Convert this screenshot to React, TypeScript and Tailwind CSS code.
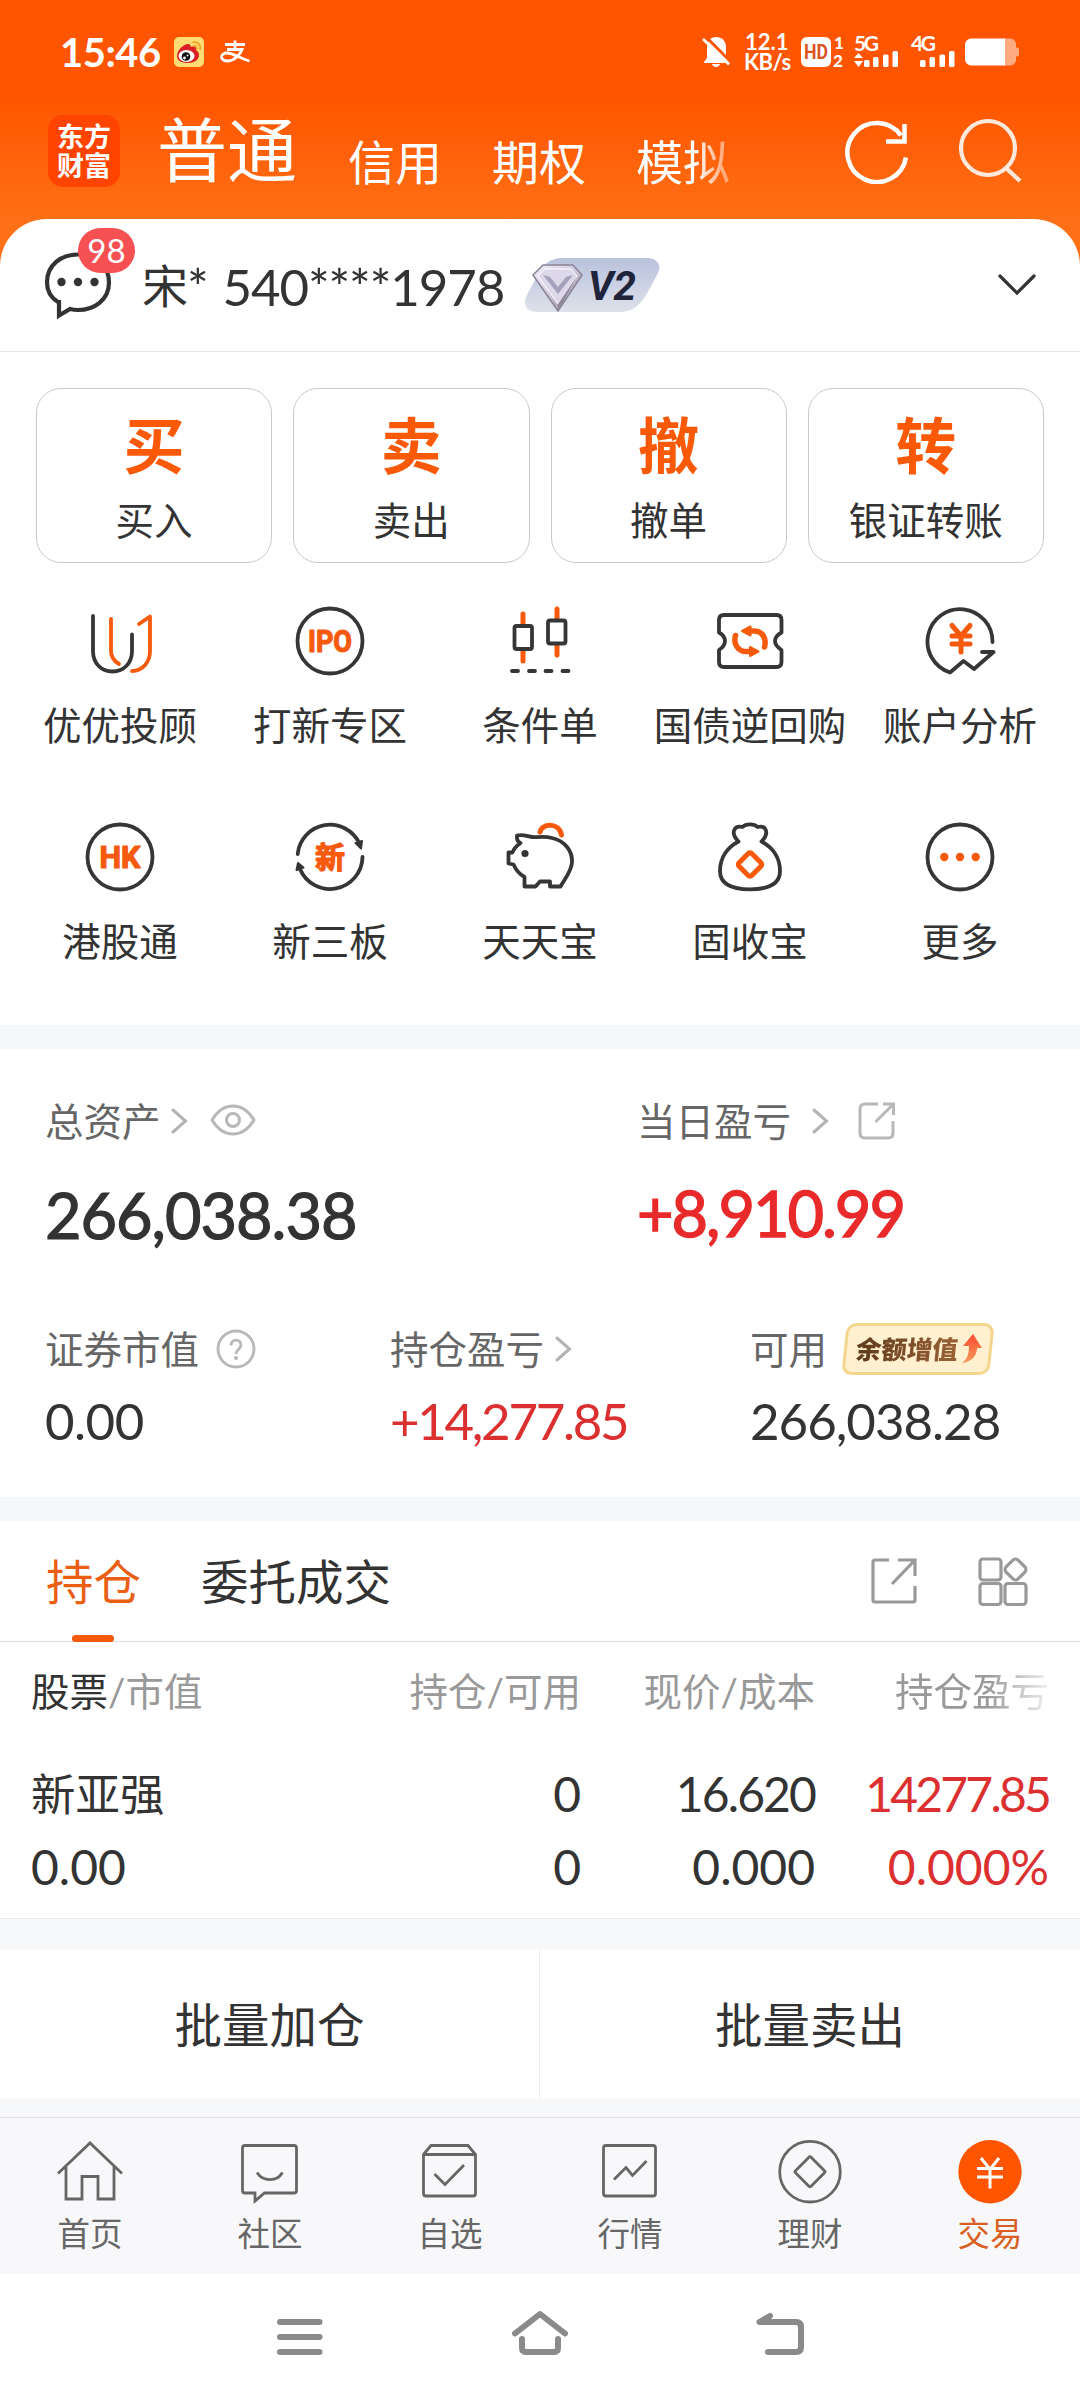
import React from "react";

const FONT = "font-[Lato,'Noto_Sans_CJK_SC',sans-serif]";

function StatusBar() {
  return (
    <div className="flex h-[100px] items-center justify-between pl-[60px] pr-[61px] pt-[3px] text-white">
      <div className="flex items-center">
        <span className="w-[114px] whitespace-nowrap text-[40px] font-bold leading-none tracking-[-0.5px]">15:46</span>
        <svg width="30" height="30" viewBox="0 0 30 30">
          <rect width="30" height="30" rx="5" fill="#ffdc74" />
          <path d="M3 19C3 13 10 7 14 7c2 0 3 1 2.500 3 3-1 6-.5 5.500 3 2 1 3 3 3 5 0 5-5 8-11 8S3 24 3 19Z" fill="#dc1f26" />
          <ellipse cx="12.500" cy="19" rx="8" ry="6" fill="#fff" />
          <circle cx="12" cy="19.500" r="4.300" fill="#111" />
          <circle cx="10.500" cy="21" r="1.400" fill="#fff" />
          <circle cx="13.500" cy="18.500" r="0.900" fill="#fff" />
          <path d="M18.500 5.500c5-1.500 9 2.500 7.500 7.500M19 9c2.500-.6 4.500 1.200 4 3.500" fill="none" stroke="#f0a020" strokeWidth="1.700" />
        </svg>
        <svg className="ml-[16px]" width="31" height="24" viewBox="0 0 31 24" fill="none" stroke="#fff" strokeWidth="2.800">
          <path d="M5 4.500H25M15 0.500V9.500M7 9.500H22C20 15 14 21 8 21C3.500 21 1.500 19 1.500 17C1.500 14.500 4 13 7 13C13 13 20 18.500 29.500 21" />
        </svg>
      </div>
      <div className="flex items-center">
        <svg width="28" height="32" viewBox="0 0 28 32">
          <path d="M14 1c6 0 10 4 10 10v11l3 4v1H2v-1l3-4V11C5 5 9 1 14 1ZM10 28h8c-.5 4-7.500 4-8 0Z" fill="#fff" />
          <path d="M2 -1L30 27" stroke="#ff5500" strokeWidth="3" />
          <path d="M1 3L27 28.500" stroke="#fff" strokeWidth="2.600" />
        </svg>
        <div className="ml-[14px] flex w-[57px] flex-col whitespace-nowrap text-[22px] font-bold leading-[20px]">
          <div className="pl-px">12.1</div>
          <div className="tracking-[-0.5px]">KB/s</div>
        </div>
        <svg className="overflow-visible" width="43" height="32" viewBox="0 0 43 32">
          <rect y="1" width="30" height="30" rx="6" fill="#fff" />
          <text x="15" y="23" textAnchor="middle" textLength="24" lengthAdjust="spacingAndGlyphs" className="font-[Roboto]" fontSize="20" fontWeight="700" fill="#d9541e">HD</text>
          <text x="33" y="13" fontSize="17" fontWeight="900" className="font-[Lato]" fill="#fff">1</text>
          <text x="32" y="31" fontSize="17" fontWeight="900" className="font-[Lato]" fill="#fff">2</text>
        </svg>
        <svg className="ml-[10px] overflow-visible" width="46" height="32" viewBox="0 0 46 32" fill="#fff">
          <text x="0" y="15" fontSize="21" fontWeight="700" className="font-[Lato]" textLength="25">5G</text>
          <path d="M0 22l4.500-5 4.500 5ZM0 25h9l-4.500 6Z" />
          <rect x="10" y="24" width="5.500" height="7" rx="1.500" />
          <rect x="19" y="21" width="5.500" height="10" rx="1.500" />
          <rect x="29" y="18.500" width="5.500" height="12.500" rx="1.500" />
          <rect x="38.500" y="15" width="5.500" height="16" rx="1.500" />
        </svg>
        <svg className="ml-[11px] overflow-visible" width="46" height="32" viewBox="0 0 46 32" fill="#fff">
          <text x="0" y="15" fontSize="21" fontWeight="700" className="font-[Lato]" textLength="25">4G</text>
          <rect x="9" y="24" width="5.500" height="7" rx="1.500" />
          <rect x="18.500" y="21" width="5.500" height="10" rx="1.500" />
          <rect x="28.500" y="18.500" width="5.500" height="12.500" rx="1.500" />
          <rect x="38" y="15" width="5.500" height="16" rx="1.500" />
        </svg>
        <svg className="ml-[8px]" width="54" height="28" viewBox="0 0 54 28">
          <path d="M40 0.500H45c3.500 0 6 2.500 6 6V9.500h1c1.500 0 2 1 2 2v5c0 1-.5 2-2 2h-1V21.500c0 3.500-2.500 6-6 6H40Z" fill="#ffab82" />
          <path d="M7 0.500H40V27.500H7c-4 0-7-2.500-7-6.500V7C0 3 3 .5 7 .5Z" fill="#fff" />
        </svg>
      </div>
    </div>
  );
}

function Header() {
  return (
    <div className="flex h-[119px] items-start pl-[48px] text-white">
      <div className="mt-[15px] flex size-[72px] flex-col items-center justify-center rounded-[15px] bg-[#ff4400] text-[27px] font-bold leading-[29px]">
        <div>东方</div>
        <div>财富</div>
      </div>
      <div className="ml-[37px] mt-[15px] w-[144px] text-[70px] leading-none">普通</div>
      <div className="ml-[47px] mt-[39px] flex gap-[50px] text-[47px] leading-none">
        <span>信用</span>
        <span>期权</span>
        <span className="[mask-image:linear-gradient(90deg,#000_62%,rgba(0,0,0,0.35)_100%)]">模拟</span>
      </div>
      <svg className="ml-[114px] mt-[18px]" width="66" height="66" viewBox="0 0 66 66" fill="none" stroke="#fff" strokeWidth="4.500">
        <path d="M62 39.500A29.500 29.500 0 1 1 57 17.500" />
        <path d="M42 23.500H60.500V6" />
      </svg>
      <svg className="ml-[47px] mt-[17px]" width="66" height="66" viewBox="0 0 66 66" fill="none" stroke="#ffe9dc" strokeWidth="4.200">
        <circle cx="31" cy="31" r="27" />
        <path d="M49 51L63 64" />
      </svg>
    </div>
  );
}

function AccountRow() {
  return (
    <div className="flex h-[133px] items-center border-b border-[#e6e6e6] pl-[44px] pr-[43px]">
      <div className="relative">
        <svg width="70" height="70" viewBox="0 0 70 70" fill="none" className="mt-px">
          <path d="M14 51C6 46 3 39 3 31.500C3 14 17 3.500 34 3.500S65 14 65 31.500S50 59 34 59C31 59 28 58.500 26 58L15 64.500V51Z" stroke="#333" strokeWidth="4.200" />
          <circle cx="17.500" cy="31" r="4.200" fill="#333" />
          <circle cx="34" cy="31" r="4.200" fill="#333" />
          <circle cx="50.500" cy="31" r="4.200" fill="#333" />
        </svg>
        <div className="absolute left-[34px] top-[-22px] flex h-[45px] w-[57px] items-center justify-center rounded-full bg-[#f65052] text-[33px] leading-none text-white">98</div>
      </div>
      <div className="ml-[28px] flex w-[383px] items-center whitespace-nowrap pt-[2px] text-[51px] leading-none tracking-[-1.100px] text-[#333]">
        <span className="text-[46px]">宋</span>
        <span>*</span>
        <span className="ml-[15px]">540****1978</span>
      </div>
      <svg width="137" height="54" viewBox="0 0 137 54">
        <defs>
          <linearGradient id="vipBg" x1="0" y1="0" x2="0" y2="1">
            <stop offset="0" stopColor="#b9c2dd" />
            <stop offset="1" stopColor="#dde1ea" />
          </linearGradient>
          <linearGradient id="gem" x1="0" y1="0" x2="1" y2="1">
            <stop offset="0" stopColor="#f2eefb" />
            <stop offset="0.500" stopColor="#cfc8dd" />
            <stop offset="1" stopColor="#7d7787" />
          </linearGradient>
        </defs>
        <path d="M37 0H122C132 0 137 7 133 15L124 32C116 47 108 54 94 54H12C2 54 -2 47 1 39L12 18C18 6 26 0 37 0Z" fill="url(#vipBg)" />
        <path d="M18 7H48L57 17L33 53L8 17Z" fill="url(#gem)" stroke="#8a8496" strokeWidth="1.500" />
        <path d="M20 11H46L52 18L33 46L13 18Z" fill="#dcd8ea" stroke="#fff" strokeWidth="1" />
        <path d="M18 17L25 19L33 29L41 19L48 17L33 36Z" fill="#a3a2bb" />
        <path d="M33 46L52 18L33 53Z" fill="#8e889a" />
        <text x="63" y="42" className="font-[Roboto]" fontSize="41" fontWeight="700" fontStyle="italic" fill="#20243a" textLength="48" lengthAdjust="spacingAndGlyphs">V2</text>
      </svg>
      <svg className="ml-auto" width="40" height="24" viewBox="0 0 40 24" fill="none" stroke="#333" strokeWidth="3.200" strokeLinecap="round">
        <path d="M3 3L20 20L37 3" />
      </svg>
    </div>
  );
}

const actions = [
  ["买", "买入"],
  ["卖", "卖出"],
  ["撤", "撤单"],
  ["转", "银证转账"],
];

const O = "#f75a0c";

function Badge({ text, size, width }: { text: string; size: number; width: number }) {
  return (
    <text x="36" y={36 + size * 0.36} textAnchor="middle" fontSize={size} fontWeight="700" fill={O} stroke={O} strokeWidth="1.200" strokeLinejoin="round" textLength={width} lengthAdjust="spacingAndGlyphs" className="font-[Roboto,'Noto_Sans_CJK_SC']">
      {text}
    </text>
  );
}

const tools: { label: string; icon: React.ReactNode }[] = [
  {
    label: "优优投顾",
    icon: (
      <>
        <path d="M9 11V46C9 58 17 66.500 28.500 66.500S48 58 48 46V29.500" />
        <path d="M27 14V46C27 51.500 30 56 35 59" stroke={O} />
        <path d="M55 19L66 11.500V46C66 57 59 65.500 48 66.200" stroke={O} />
      </>
    ),
  },
  {
    label: "打新专区",
    icon: (
      <>
        <circle cx="36" cy="36" r="32.500" />
        <Badge text="IPO" size={31} width={44} />
      </>
    ),
  },
  {
    label: "条件单",
    icon: (
      <>
        <path d="M19 9V19M19 46V56M53 4V14M53 41V50" stroke={O} strokeWidth="5" />
        <rect x="10.500" y="21" width="17.500" height="23" rx="2" />
        <rect x="44" y="15.500" width="17.500" height="23" rx="2" />
        <path d="M8 66H14M25 66H31M41.500 66H47.500M58.500 66H64.500" />
      </>
    ),
  },
  {
    label: "国债逆回购",
    icon: (
      <>
        <path d="M10 10H62.500Q67.500 10 67.500 15V27.500C63 30 61 32.500 61 36S63 42 67.500 45V57Q67.500 62 62.500 62H10Q5 62 5 57V45C9.500 42 11 39.500 11 36S9.500 30 5 27.500V15Q5 10 10 10Z" />
        <path d="M36 26H40C48 26 53 33 50.500 42" stroke={O} strokeWidth="5.500" />
        <path d="M36.500 46.500H32.500C24 46.500 19 39 21.500 30.500" stroke={O} strokeWidth="5.500" />
        <path d="M28 26L36.500 21.500V30.500ZM44.500 46.500L36 42V51Z" fill={O} stroke={O} strokeWidth="2" />
      </>
    ),
  },
  {
    label: "账户分析",
    icon: (
      <>
        <path d="M68.500 37A32.500 32.500 0 1 0 26 67.500L39.500 56L50 64L69.500 47H58" />
        <path d="M28 20.500L37 31L46 20.500M28 31H46M28 39H46M37 31V47" stroke={O} strokeWidth="5" />
      </>
    ),
  },
  {
    label: "港股通",
    icon: (
      <>
        <circle cx="36" cy="36" r="32.500" />
        <Badge text="HK" size={31} width={41} />
      </>
    ),
  },
  {
    label: "新三板",
    icon: (
      <>
        <path d="M3.700 33A32.500 32.500 0 0 1 65.500 22.500M68.500 36A32.500 32.500 0 0 1 6 48" />
        <path d="M61.500 22L68 20L67 27.500ZM2.500 49L4 42L9.500 46.500Z" fill="#333" strokeWidth="2" />
        <Badge text="新" size={30} width={30} />
      </>
    ),
  },
  {
    label: "天天宝",
    icon: (
      <>
        <path d="M36 11C38 2 55 1 57.500 14" stroke={O} strokeWidth="5" />
        <path d="M13 14.500C20 12.500 25 16.500 32 16.200C38 15.500 43 15.500 48 17C61 20 68.500 30 68 41C67.500 51 61 57 56.500 65.500H46V60.500H36L31.500 65.500H20.500V56C15 53 12 49 9.500 43.500L4.500 42.500V31.500H8.500C10 27 13 24.500 16.500 22C13 20.500 12.500 18 13 14.500Z" />
        <circle cx="21" cy="32.500" r="3.600" fill="#333" stroke="none" />
      </>
    ),
  },
  {
    label: "固收宝",
    icon: (
      <>
        <path d="M24.500 20.500C14 26 6 36 6 50C6 62 16 68.300 36 68.300S66 62 66 50C66 36 58 26 47.500 20.500C56 12 52 4 43.500 6C40 2.500 32 2.500 28.500 6C20 4 16 12 24.500 20.500" />
        <rect x="27" y="34.500" width="18" height="18" rx="2.500" transform="rotate(45 36 43.500)" stroke={O} strokeWidth="5" />
      </>
    ),
  },
  {
    label: "更多",
    icon: (
      <>
        <circle cx="36" cy="36" r="32.500" />
        <g fill={O} stroke="none">
          <circle cx="20.300" cy="36" r="4.200" />
          <circle cx="36" cy="36" r="4.200" />
          <circle cx="51.700" cy="36" r="4.200" />
        </g>
      </>
    ),
  },
];

function ToolGrid() {
  return (
    <div className="grid h-[462px] grid-cols-5 content-start gap-y-[37px] px-[15px] pt-[42px]">
      {tools.map((t) => (
        <div key={t.label} className="flex h-[179px] flex-col items-center">
          <svg width="72" height="72" viewBox="0 0 72 72" fill="none" stroke="#363636" strokeWidth="3.800" strokeLinecap="round" strokeLinejoin="round">
            {t.icon}
          </svg>
          <div className="mt-[29px] whitespace-nowrap text-[38.500px] leading-none text-[#333]">{t.label}</div>
        </div>
      ))}
    </div>
  );
}

function Chevron({ className }: { className: string }) {
  return (
    <svg className={className} width="18" height="28" viewBox="0 0 18 28" fill="none" stroke="#b3b3b3" strokeWidth="3" strokeLinecap="round">
      <path d="M3 3L15.500 14L3 25" />
    </svg>
  );
}

function Assets() {
  return (
    <section className="h-[448px] pt-[48px] text-[#666]">
      <div className="flex pl-[45px]">
        <div className="w-[592px]">
          <div className="flex h-[48px] items-center text-[38.500px] leading-none">
            总资产
            <Chevron className="ml-[9px]" />
            <svg className="ml-[22px] mt-[-3px]" width="46" height="34" viewBox="0 0 46 34" fill="none" stroke="#b8b8b8" strokeWidth="3">
              <path d="M2 17C8 7 15 3 23 3S38 7 44 17C38 27 31 31 23 31S8 27 2 17Z" />
              <circle cx="23" cy="17" r="6.500" />
            </svg>
          </div>
          <div className="mt-[34px] text-[63px] leading-[72px] tracking-[-1px] text-[#333] [-webkit-text-stroke:1.200px_#333]">266,038.38</div>
        </div>
        <div>
          <div className="flex h-[48px] items-center text-[38.500px] leading-none">
            当日盈亏
            <Chevron className="ml-[20px]" />
            <svg className="ml-[28px]" width="40" height="40" viewBox="0 0 40 40" fill="none" stroke="#b8b8b8" strokeWidth="3">
              <path d="M21 3H8Q3 3 3 8V32Q3 37 8 37H31Q36 37 36 32V20M26 3H36.500V14M36 3.500L18.500 21" />
            </svg>
          </div>
          <div className="mt-[32px] text-[63px] leading-[72px] tracking-[-2px] text-[#e92a2a] [-webkit-text-stroke:1.400px_#e92a2a]">+8,910.99</div>
        </div>
      </div>
      <div className="mt-[71px] flex pl-[45px]">
        <div className="w-[345px]">
          <div className="flex h-[54px] items-center text-[38.500px] leading-none">
            证券市值
            <svg className="ml-[17px]" width="40" height="40" viewBox="0 0 40 40" fill="none" stroke="#b8b8b8" strokeWidth="2.800">
              <circle cx="20" cy="20" r="18" />
              <path d="M15 16.500C15 9.500 25 9.500 25 16C25 20 20 20.500 20 25" />
              <circle cx="20" cy="29" r="1.300" fill="#b8b8b8" strokeWidth="1.500" />
            </svg>
          </div>
          <div className="mt-[19px] text-[51px] leading-[52px] tracking-[-0.500px] text-[#333]">0.00</div>
        </div>
        <div className="w-[360px]">
          <div className="flex h-[54px] items-center text-[38.500px] leading-none">
            持仓盈亏
            <Chevron className="ml-[10px]" />
          </div>
          <div className="mt-[19px] text-[51px] leading-[52px] tracking-[-2.300px] text-[#dc3030]">+14,277.85</div>
        </div>
        <div>
          <div className="flex h-[54px] items-center text-[38.500px] leading-none">
            可用
            <div className="relative ml-[17px] flex h-[52px] w-[148px] items-center pl-[12px]">
              <div className="absolute inset-0 -skew-x-6 rounded-[10px] border-[3px] border-[#f3d68c] bg-[#fff0cf]" />
              <span className="relative inline-block -skew-x-6 bg-linear-to-r from-[#5f3a1c] to-[#9a6235] bg-clip-text text-[25.500px] font-black leading-[30px] text-transparent">余额增值</span>
              <svg className="relative ml-[2px]" width="24" height="32" viewBox="0 0 24 32">
                <defs>
                  <linearGradient id="rise" x1="0" y1="0" x2="0" y2="1">
                    <stop offset="0" stopColor="#ff4b30" />
                    <stop offset="1" stopColor="#f49a5c" />
                  </linearGradient>
                </defs>
                <path d="M13 1L22 15H17C17 23 11 29 2 30C7 26 9 22 9 13H3Z" fill="url(#rise)" />
              </svg>
            </div>
          </div>
          <div className="mt-[19px] text-[51px] leading-[52px] tracking-[-1px] text-[#333]">266,038.28</div>
        </div>
      </div>
    </section>
  );
}

function Holdings() {
  return (
    <section className="h-[397px]">
      <div className="flex h-[121px] items-center border-b border-[#dcdcdc] pl-[46px] pr-[52px] text-[47.500px] leading-none text-[#333]">
        <div className="relative flex h-full items-center pt-[2px] text-[#ea5f14]">
          持仓
          <div className="absolute bottom-[-1px] left-[26px] h-[7px] w-[42px] rounded-full bg-[#f35a0c]" />
        </div>
        <div className="ml-[60px] pt-[2px]">委托成交</div>
        <svg className="ml-auto" width="48" height="48" viewBox="0 0 48 48" fill="none" stroke="#999" strokeWidth="3.200">
          <path d="M19 3H5Q3 3 3 5V43Q3 45 5 45H43Q45 45 45 43V29M28 3H45V19M44.500 3.500L22 27" />
        </svg>
        <svg className="ml-[60px] mt-[2px]" width="50" height="50" viewBox="0 0 50 50" fill="none" stroke="#999" strokeWidth="3.200">
          <rect x="2" y="2" width="21" height="21" rx="3" />
          <rect x="2" y="26.500" width="21" height="21" rx="3" />
          <rect x="27" y="26.500" width="21" height="21" rx="3" />
          <rect x="29" y="4" width="17" height="17" rx="4" transform="rotate(45 37.500 12.500)" />
        </svg>
      </div>
      <div className="grid h-[98px] grid-cols-[350px_200px_234px_234px] items-center pl-[31px] text-[38.500px] leading-none text-[#999]">
        <div className="whitespace-nowrap"><span className="text-[#333]">股票</span>/市值</div>
        <div className="whitespace-nowrap text-right">持仓/可用</div>
        <div className="text-right">现价/成本</div>
        <div className="ml-auto w-fit [mask-image:linear-gradient(90deg,#000_60%,rgba(0,0,0,0.15)_100%)]">持仓盈亏</div>
      </div>
      <div className="grid grid-cols-[350px_200px_234px_234px] items-center pl-[31px] pt-[17px] text-[48px] leading-[73px] text-[#333]">
        <div className="text-[44.500px]">新亚强</div>
        <div className="text-right">0</div>
        <div className="text-right tracking-[-1.900px]">16.620</div>
        <div className="text-right tracking-[-2.800px] text-[#dc3030]">14277.85</div>
        <div>0.00</div>
        <div className="text-right">0</div>
        <div className="text-right">0.000</div>
        <div className="text-right text-[#dc3030]">0.000%</div>
      </div>
    </section>
  );
}

const navItems: { label: string; icon: React.ReactNode; active?: boolean }[] = [
  { label: "首页", icon: <path d="M4 36.500L36 6L68 36.500M12 30V62H28V39.500H44V62H60V30" /> },
  {
    label: "社区",
    icon: <path d="M11 8.500H60Q62.500 8.500 62.500 11V53.500Q62.500 56 60 56H30.500L21 64V56H11Q8.500 56 8.500 53.500V11Q8.500 8.500 11 8.500ZM23 35.500C29 45 43 45 48.500 35.500" />,
  },
  {
    label: "自选",
    icon: <path d="M9.500 17.500L17 8.500H54L61.500 17.500V56.500Q61.500 59 59 59H12Q9.500 59 9.500 56.500ZM9.500 17.500H61.500M20.500 37L31 47.500L50 28" />,
  },
  {
    label: "行情",
    icon: <path d="M12 8.500H59Q61.500 8.500 61.500 11V56.500Q61.500 59 59 59H12Q9.500 59 9.500 56.500V11Q9.500 8.500 12 8.500ZM20 42.500L32 30.500L38.500 38.500L52.500 24" />,
  },
  {
    label: "理财",
    icon: (
      <>
        <circle cx="36" cy="34.700" r="30.300" />
        <rect x="25" y="23.700" width="22" height="22" rx="1.500" transform="rotate(45 36 34.700)" />
      </>
    ),
  },
  {
    label: "交易",
    active: true,
    icon: (
      <>
        <circle cx="36" cy="34.700" r="31.700" fill="#ff5500" stroke="none" />
        <path d="M27 21L36 32.500L45 21M23 31.500H49M23 40H49M36 32.500V51.500" stroke="#fff" strokeWidth="3" />
      </>
    ),
  },
];

function BottomNav() {
  return (
    <nav className="grid h-[157px] grid-cols-6 border-t border-[#e0e2e4] bg-[#f8f8fa] pt-[19px]">
      {navItems.map((n) => (
        <div key={n.label} className={n.active ? "flex flex-col items-center text-[#d96022]" : "flex flex-col items-center text-[#666]"}>
          <svg width="72" height="68" viewBox="0 0 72 68" fill="none" stroke="#666" strokeWidth="2.800">
            {n.icon}
          </svg>
          <div className="mt-[13px] text-[32.500px] leading-none">{n.label}</div>
        </div>
      ))}
    </nav>
  );
}

function SystemNav() {
  return (
    <div className="flex h-[126px] items-start bg-white pt-[36px]">
      <svg className="ml-[277px]" width="46" height="48" viewBox="0 0 46 48" stroke="#8a8a8a" strokeWidth="6" strokeLinecap="round">
        <path d="M3 12H42.500M3 27H42.500M3 42H42.500" />
      </svg>
      <svg className="ml-[187px]" width="60" height="48" viewBox="0 0 60 48" fill="none" stroke="#8a8a8a" strokeWidth="6" strokeLinecap="round" strokeLinejoin="round">
        <path d="M5 23.500L30 4L55 23.500M12 29V38Q12 42 16 42H44Q48 42 48 38V29" />
      </svg>
      <svg className="ml-[186px]" width="50" height="48" viewBox="0 0 50 48" fill="none" stroke="#8a8a8a" strokeWidth="6" strokeLinecap="round" strokeLinejoin="round">
        <path d="M14 6L3.500 12H40Q45 12 45 17V37Q45 42 40 42H12" />
      </svg>
    </div>
  );
}

export default function App() {
  return (
    <div className={`${FONT} h-[2400px] w-[1080px] overflow-hidden bg-white`}>
      <div className="bg-[linear-gradient(180deg,#ff5500_0px,#ff5500_95px,#ff7016_225px,#ff7016_280px)]">
        <StatusBar />
        <Header />
        <div className="rounded-t-[47px] bg-white">
          <AccountRow />
          <div className="grid grid-cols-4 gap-[21px] px-[36px] pt-[36px]">
            {actions.map(([big, label]) => (
              <div key={label} className="flex h-[175px] flex-col items-center rounded-[25px] border border-[#cacaca] text-[#333]">
                <div className="mt-[26px] text-[61px] font-bold leading-none text-[#fa5a08]">{big}</div>
                <div className="mt-[25px] text-[38.500px] leading-none">{label}</div>
              </div>
            ))}
          </div>
          <ToolGrid />
        </div>
      </div>
      <div className="h-[24px] bg-[#f6f7fa]" />
      <Assets />
      <div className="h-[24px] bg-[#f6f7fa]" />
      <Holdings />
      <div className="h-[31px] border-t border-[#ececee] bg-[#f7f8fa]" />
      <div className="grid h-[150px] grid-cols-2 text-[47.500px] leading-none text-[#333]">
        <div className="flex items-center justify-center border-r border-[#ebecee] pt-px">批量加仓</div>
        <div className="flex items-center justify-center pt-px">批量卖出</div>
      </div>
      <div className="h-[18px] bg-[#f7f8fa]" />
      <BottomNav />
      <SystemNav />
    </div>
  );
}
